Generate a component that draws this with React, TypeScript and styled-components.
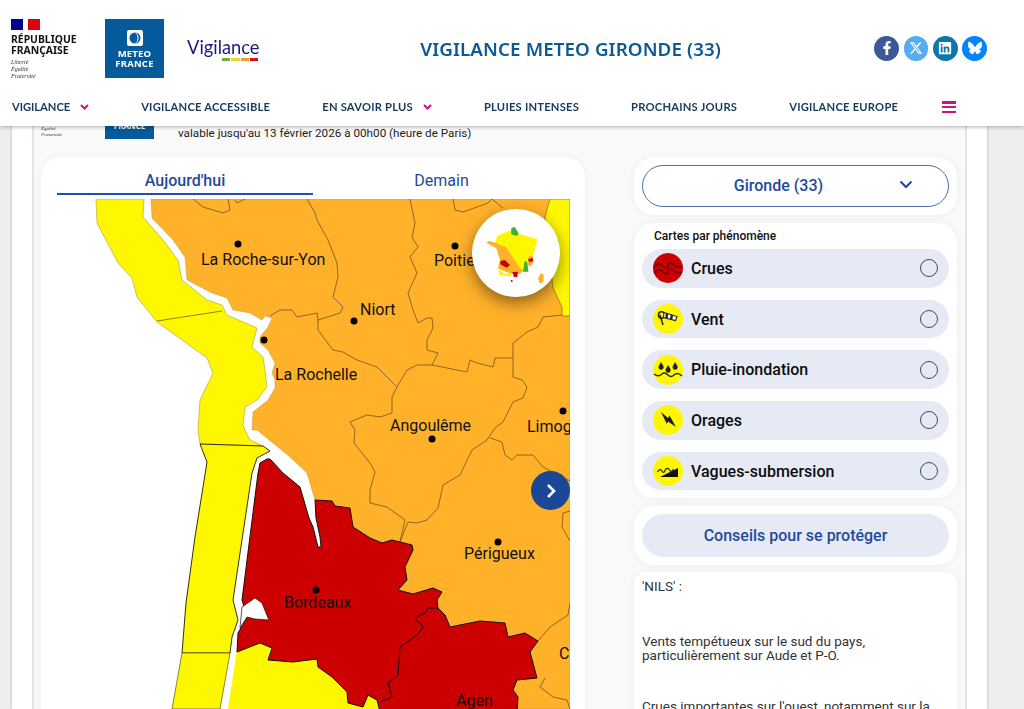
import styled, { createGlobalStyle } from "styled-components";
import { FaFacebookF, FaLinkedin } from "react-icons/fa";
import { FaBluesky, FaXTwitter } from "react-icons/fa6";

const GlobalStyle = createGlobalStyle`
  html, body {
    margin: 0;
    height: 100%;
    overflow: hidden;
    background: #eeeeee;
    font-family: Roboto, "Liberation Sans", sans-serif;
  }
`;

const Header = styled.header`
  position: fixed;
  top: 0;
  left: 0;
  right: 0;
  z-index: 10;
  height: 126px;
  background: #fff;
  box-shadow: 0 1px 4px rgba(0, 0, 0, 0.3);
`;

const TopRow = styled.div`
  display: flex;
  align-items: flex-start;
  height: 88px;
  padding: 19px 37px 0 11px;
  box-sizing: border-box;
`;

const Marianne = styled.div`
  width: 94px;
  flex: none;
`;

const Flag = styled.div`
  width: 29px;
  height: 11px;
  margin-bottom: 4px;
  background: linear-gradient(90deg, #000091 0 40%, #fff 40% 58%, #e1000f 58%);
`;

const Republic = styled.div`
  font: bold 10.4px/11px "Noto Sans", "Liberation Sans", sans-serif;
  color: #111;
`;

const Motto = styled.div<{ $small?: boolean }>`
  font: italic ${(p) => (p.$small ? "5px/6px" : "6px/7px")} "Liberation Serif", serif;
  color: #333;
  margin-top: ${(p) => (p.$small ? "0" : "3px")};
`;

const MeteoLogo = styled.div`
  width: 59px;
  height: 59px;
  flex: none;
  background: #045a9a;
  display: flex;
  flex-direction: column;
  align-items: center;
  padding-top: 11px;
  box-sizing: border-box;
  color: #fff;
  font: bold 9.5px/9.5px "Noto Sans", "Liberation Sans", sans-serif;
  letter-spacing: 0.2px;
  text-align: center;
  svg {
    margin-bottom: 3px;
  }
`;

const VigilanceLogo = styled.div`
  width: 72px;
  margin: 19px 0 0 23px;
  flex: none;
  color: #1a1a82;
  font: 400 18.3px/19px Lato, sans-serif;
`;

const LevelBars = styled.div`
  display: flex;
  gap: 1px;
  height: 3px;
  margin: 1px 1px 0 35px;
`;

const LevelBar = styled.span<{ $color: string }>`
  flex: 1;
  background: ${(p) => p.$color};
`;

const Title = styled.h1`
  flex: 1;
  margin: 17px 0 0;
  text-align: center;
  padding-left: 8px;
  font: 600 18.75px/26px "Noto Sans", sans-serif;
  letter-spacing: 0.1px;
  color: #0b5a96;
`;

const Socials = styled.div`
  display: flex;
  gap: 4.5px;
  margin-top: 17px;
  flex: none;
`;

const SocialLink = styled.a<{ $bg: string }>`
  width: 24.8px;
  height: 24.8px;
  border-radius: 50%;
  background: ${(p) => p.$bg};
  color: #fff;
  display: flex;
  align-items: center;
  justify-content: center;
  font-size: 14px;
`;

const Nav = styled.nav`
  display: flex;
  align-items: center;
  gap: 52px;
  height: 38px;
  padding-left: 12px;
`;

const NavItem = styled.a`
  display: flex;
  align-items: center;
  gap: 10px;
  font: 700 11.2px/14px Lato, sans-serif;
  letter-spacing: 0.22px;
  color: #17395c;
  text-transform: uppercase;
  &:first-child {
    letter-spacing: -0.05px;
  }
`;

const Burger = styled.span`
  width: 14px;
  height: 12px;
  margin-left: -8px;
  background: linear-gradient(#d0127f 0 2.5px, transparent 2.5px 4.5px, #d0127f 4.5px 7px, transparent 7px 9.5px, #d0127f 9.5px);
`;

const Sheet = styled.div`
  width: 935px;
  height: 100vh;
  margin-left: 12px;
  padding: 0 20px;
  background: #fff;
  box-shadow: 0 0 3px rgba(0, 0, 0, 0.25);
`;

const Frame = styled.main`
  height: 100%;
  border: solid #e4e4e4;
  border-width: 0 2px;
  background: #fafafa;
  padding: 0 7px;
  box-sizing: border-box;
`;

const Banner = styled.div`
  display: flex;
  align-items: flex-end;
  height: 139px;
  margin-bottom: 18px;
`;

const BannerMotto = styled.div`
  width: 64px;
  flex: none;
  padding: 0 0 1px 0;
  box-sizing: border-box;
`;

const BannerLogo = styled.div`
  width: 49px;
  height: 49px;
  background: #045a9a;
  display: flex;
  align-items: flex-end;
  justify-content: center;
  padding-bottom: 9px;
  box-sizing: border-box;
  color: #fff;
  font: bold 8px/9px "Noto Sans", sans-serif;
`;

const Validity = styled.p`
  margin: 0 0 -1px 24px;
  font-size: 11.7px;
  line-height: 13px;
  color: #1c1c1c;
`;

const Columns = styled.div`
  display: flex;
  gap: 49px;
  align-items: flex-start;
`;

const MapPanel = styled.section`
  width: 544px;
  flex: none;
  padding: 0 15px 0 16px;
  box-sizing: border-box;
  background: #fff;
  border-radius: 20px 20px 0 0;
  box-shadow: 0 0 10px rgba(0, 0, 0, 0.05);
`;

const Tabs = styled.div`
  display: grid;
  grid-template-columns: 256px 1fr;
  height: 42px;
`;

const Tab = styled.div<{ $active?: boolean }>`
  height: 36px;
  line-height: 47px;
  text-align: center;
  font-size: 16px;
  font-weight: ${(p) => (p.$active ? 500 : 400)};
  color: #1f4a9c;
  border-bottom: 2px solid ${(p) => (p.$active ? "#1e4fb0" : "transparent")};
`;

const MapArea = styled.div`
  position: relative;
  width: 513px;
  height: 520px;
`;

const MapDrawing = styled.svg`
  display: block;
  width: 513px;
  height: 520px;
`;

const MapLabel = styled.text`
  font: 400 16px Roboto, sans-serif;
  fill: #111;
`;

const DeptLine = styled.polyline`
  fill: none;
  stroke: #75521a;
  stroke-width: 0.8;
`;

const MiniMapButton = styled.div`
  position: absolute;
  left: 415px;
  top: 10px;
  width: 88px;
  height: 88px;
  border-radius: 50%;
  background: #fff;
  box-shadow: 0 6px 16px rgba(0, 0, 0, 0.45);
  svg {
    display: block;
  }
`;

const NextButton = styled.div`
  position: absolute;
  left: 474px;
  top: 272px;
  width: 39px;
  height: 39px;
  border-radius: 50%;
  background: #1b4796;
  color: #fff;
  display: flex;
  align-items: center;
  justify-content: center;
`;

const Sidebar = styled.aside`
  width: 323px;
  flex: none;
  display: flex;
  flex-direction: column;
  gap: 8px;
`;

const Card = styled.div`
  background: #fff;
  border-radius: 20px;
  padding: 8px;
  box-shadow: 0 0 10px rgba(0, 0, 0, 0.06);
`;

const Selector = styled.div`
  height: 42px;
  box-sizing: border-box;
  border: 1px solid #4f70ad;
  border-radius: 21px;
  display: flex;
  align-items: center;
  justify-content: center;
  position: relative;
  font-size: 16px;
  font-weight: 500;
  color: #1f4a9c;
  padding: 0 34px 2px 0;
  svg {
    position: absolute;
    right: 35px;
    top: 14px;
  }
`;

const CardTitle = styled.div`
  font-size: 12px;
  font-weight: 500;
  line-height: 14px;
  color: #111;
  padding: 0 0 6px 12px;
  margin-top: -2px;
`;

const Phenomena = styled.div`
  display: flex;
  flex-direction: column;
  gap: 12px;
`;

const PhenomenonRow = styled.label`
  height: 38.7px;
  display: flex;
  align-items: center;
  gap: 8px;
  padding: 0 11px;
  border-radius: 20px;
  background: #e6eaf5;
  font-size: 16px;
  font-weight: 500;
  color: #0c0c0c;
  svg {
    flex: none;
  }
`;

const RowLabel = styled.span`
  flex: 1;
`;

const Radio = styled.span`
  width: 16px;
  height: 16px;
  border: 1px solid #3c4a68;
  border-radius: 50%;
`;

const AdviceButton = styled.div`
  height: 43px;
  border-radius: 22px;
  background: #e6eaf5;
  display: flex;
  align-items: center;
  justify-content: center;
  font-size: 16px;
  font-weight: 500;
  color: #1f4a9c;
`;

const Bulletin = styled.div`
  background: #fff;
  border-radius: 12px 12px 0 0;
  margin-top: -1.5px;
  padding: 7px 8px;
  font-size: 13.5px;
  line-height: 14px;
  color: #333;
  height: 200px;
  box-shadow: 0 0 10px rgba(0, 0, 0, 0.06);
`;

const BulletinPara = styled.p`
  margin: 0 0 41px;
  &:nth-child(2) {
    margin-bottom: 37px;
  }
`;

const ORANGE = "#ffb12a";
const YELLOW = "#fff700";
const RED = "#cc0000";

const coastNorthYellow =
  "96,199 97,223 118,263 132,278 137,297 157,322 207,358 213,373 200,400 198,430 200,444 263,446 250,440 245,430 243,425 245,407 257,400 267,387 265,370 263,357 252,347 257,328 227,315 222,305 207,300 182,280 178,260 163,240 143,217 144,199";
const girondeYellow =
  "200,444 207,462 195,537 186,603 182,653 230,653 232,637 238,620 233,600 252,473 257,458 270,451 263,446";
const landesYellow = "182,653 172,709 220,709 230,653";
const southYellow = "237,650 262,640 320,655 400,709 228,709";
const eastYellow = "550,199 570,199 570,316 562,316 562,307 553,288 545,217";
const orangeLand =
  "151,199 152,218 173,240 185,257 187,280 212,293 227,298 233,310 250,313 262,320 265,316 272,318 268,327 260,337 260,343 268,350 275,363 272,373 275,380 275,388 268,400 253,412 252,430 257,430 273,443 290,457 307,473 315,500 332,501 335,506 350,508 353,527 370,538 382,543 392,540 400,542 412,545 413,550 405,567 407,580 398,590 413,594 433,588 442,592 437,600 438,608 445,615 450,627 480,621 505,623 508,637 525,633 538,641 530,652 537,678 517,680 513,690 518,697 517,709 570,709 570,316 562,316 562,307 553,288 545,217 550,199";
const redLand =
  "267,459 270,459 283,473 300,487 309,518 313,527 318,547 321,547 320,537 316,518 315,500 332,501 335,506 350,508 353,527 370,538 382,543 392,540 400,542 412,545 413,550 405,567 407,580 398,590 413,594 433,588 442,592 437,600 438,608 445,615 450,627 480,621 505,623 508,637 525,633 538,641 530,652 537,678 517,680 513,690 518,697 517,712 380,712 377,700 368,695 363,707 348,703 347,692 332,677 318,667 317,659 293,662 268,660 272,648 260,643 237,652 238,633 247,617 242,600 258,473 260,463";
const arcachon = "242,607 255,598 262,603 268,618 269,620 255,619 247,617 240,628";
const redDivide =
  "438,608 428,608 425,613 415,618 423,627 417,635 400,647 398,675 388,683 392,697 380,702";

const deptLines = [
  "193,199 203,207 223,213 230,210 228,199",
  "235,200 237,203 245,199",
  "307,199 315,213 317,220 328,240 337,263 338,277 333,297 343,307 340,313 318,320",
  "270,316 280,310 292,310 297,317 317,313 318,320 318,330 333,350 343,352 357,360 377,367 397,387 392,397 392,413 380,417 367,415 350,422 355,430 354,443 370,463 375,472 370,490 370,503 387,507 405,520 400,542",
  "397,387 407,370 417,365 432,365 438,353 427,350 427,340 433,328 432,318 427,318 418,323 413,310 408,293 417,273 410,257 418,247 412,237 415,223 410,199",
  "432,365 457,370 467,372 470,360 477,363 493,367 495,358 513,358 513,343 527,332 538,327 543,317 562,315",
  "513,358 513,377 522,380 527,387 523,398 513,402 503,422 495,428 487,440 472,450 460,475 443,485 438,508 427,520 417,523 408,522 400,542",
  "490,438 502,442 505,455 512,460 517,455 533,455 543,467 570,481",
  "453,199 455,210 463,212 477,207 488,203 492,199 503,208",
  "570,511 563,513 562,527 570,541",
  "570,603 568,615 550,627 538,641",
  "545,678 540,687 553,697 567,700 570,709",
];

const cities = [
  { name: "La Roche-sur-Yon", x: 201, y: 265, dotX: 238, dotY: 244 },
  { name: "Niort", x: 360, y: 315, dotX: 354, dotY: 321 },
  { name: "Poitiers", x: 434, y: 266, dotX: 455, dotY: 246 },
  { name: "La Rochelle", x: 275, y: 380, dotX: 264, dotY: 340 },
  { name: "Angoulême", x: 390, y: 431, dotX: 432, dotY: 439 },
  { name: "Limoges", x: 527, y: 432, dotX: 563, dotY: 411 },
  { name: "Périgueux", x: 464, y: 559, dotX: 498, dotY: 542 },
  { name: "Bordeaux", x: 284, y: 608, dotX: 316, dotY: 590 },
  { name: "Agen", x: 456, y: 706 },
  { name: "Cahors", x: 559, y: 659 },
];

function RegionMap() {
  return (
    <MapDrawing viewBox="57 199 513 520">
      <path d="M96 199H566a4 4 0 0 1 4 4V719H96Z" fill="#fff" />
      <polygon points={orangeLand} fill={ORANGE} stroke="#b08a30" strokeWidth="0.4" />
      <polygon points={eastYellow} fill={YELLOW} stroke="#75621a" strokeWidth="0.6" />
      <polygon points={coastNorthYellow} fill={YELLOW} stroke="#a9a030" strokeWidth="0.6" />
      <line x1="157" y1="321" x2="222" y2="311" stroke="#6f6a10" strokeWidth="0.8" />
      <polygon points={southYellow} fill={YELLOW} />
      <polygon points={girondeYellow} fill={YELLOW} stroke="#1c1c00" strokeWidth="0.9" />
      <polygon points={landesYellow} fill={YELLOW} stroke="#55550a" strokeWidth="0.7" />
      {deptLines.map((points) => (
        <DeptLine key={points} points={points} />
      ))}
      <polygon points={redLand} fill={RED} stroke="#111" strokeWidth="1" />
      <polygon points={arcachon} fill="#fff" stroke="#111" strokeWidth="0.7" />
      <polyline points={redDivide} fill="none" stroke="#111" strokeWidth="1" />
      {cities.map((c) => (
        <g key={c.name}>
          {c.dotX && <circle cx={c.dotX} cy={c.dotY} r="3.5" fill="#000" />}
          <MapLabel x={c.x} y={c.y}>
            {c.name}
          </MapLabel>
        </g>
      ))}
    </MapDrawing>
  );
}

function MiniFrance() {
  return (
    <svg width="88" height="88" viewBox="22 12 264 264">
      <path d="M97 92L140 75 165 88 218 102 208 145 190 165 176 198 165 205 125 130 90 125Z" fill={YELLOW} />
      <path d="M100 190L118 207 140 204 140 214 122 212 105 210Z" fill={YELLOW} />
      <path d="M65 113L72 108 88 112 125 127 140 150 165 188 176 198 165 206 140 206 115 197 100 190 106 165 95 130Z" fill={ORANGE} />
      <path d="M107 168L120 165 136 180 126 188 107 178Z" fill={RED} />
      <path d="M143 201L160 200 158 216 148 216Z" fill={RED} />
      <circle cx="141" cy="228" r="3" fill={RED} />
      <path d="M140 69L150 66 162 85 156 93 140 88Z" fill="#3fae3c" />
      <path d="M180 168L188 170 191 200 175 200Z" fill="#3fae3c" />
      <path d="M190 156L203 150 207 170 196 186 190 178Z" fill={ORANGE} />
      <path d="M189 164L203 158 206 168 196 171Z" fill={RED} />
      <path d="M228 204L237 210 236 230 226 236 220 222Z" fill={ORANGE} />
    </svg>
  );
}

const yellowDisc = <circle cx="15" cy="15" r="15" fill="#fff700" />;

const phenomena = [
  {
    name: "Crues",
    icon: (
      <>
        <circle cx="15" cy="15" r="15" fill="#cc0000" />
        <path d="M1 14c4-4 6-4 9-1s5 3 5 0 3-4 6-1 5 3 8 1M1 20c4-4 6-4 9-1s5 3 5 0 3-4 6-1 5 3 8 1" fill="none" stroke="#6f0505" strokeWidth="1.6" />
      </>
    ),
  },
  {
    name: "Vent",
    icon: (
      <>
        {yellowDisc}
        <path d="M10 21L7 11" fill="none" stroke="#222" strokeWidth="1.5" />
        <ellipse cx="8.500" cy="11" rx="3" ry="3.2" fill="none" stroke="#222" strokeWidth="1.5" />
        <path d="M11 8.500L24 12.500 22.500 16.500 10.500 13.500Z" fill="#fff" stroke="#222" strokeWidth="1.1" />
        <path d="M14 9.500L13.500 14.200M19 11L18 15.500" stroke="#222" strokeWidth="2.4" />
      </>
    ),
  },
  {
    name: "Pluie-inondation",
    icon: (
      <>
        {yellowDisc}
        <path d="M8 7l2.400 4a2.600 2.600 0 1 1-4.600 0ZM15 10l2.400 4a2.600 2.600 0 1 1-4.600 0ZM22 7l2.400 4a2.600 2.600 0 1 1-4.600 0Z" fill="#222" />
        <path d="M1 19c4 3 6 2 8 0s4-1 6 1 4 2 6 0 5-2 8 1" fill="none" stroke="#222" strokeWidth="1.3" />
      </>
    ),
  },
  {
    name: "Orages",
    icon: (
      <>
        {yellowDisc}
        <path d="M8 7L15 13 16.500 10.500 23 22 15 16.500 13.800 19Z" fill="#1d1d1d" />
      </>
    ),
  },
  {
    name: "Vagues-submersion",
    icon: (
      <>
        {yellowDisc}
        <path d="M7 21L25 12V21Z" fill="#111" />
        <path d="M4.500 16c2-3 3.500-3 4.500-1s2 2 3-.5 3-3 4.500-.5 2.500 1.500 4-1" fill="none" stroke="#222" strokeWidth="1.2" />
      </>
    ),
  },
];

const levels = ["#78a944", "#f6d32b", "#f39a36", "#d8101c"];

function App() {
  return (
    <>
      <GlobalStyle />
      <Header>
        <TopRow>
          <Marianne>
            <Flag />
            <Republic>
              RÉPUBLIQUE
              <br />
              FRANÇAISE
            </Republic>
            <Motto>
              Liberté
              <br />
              Égalité
              <br />
              Fraternité
            </Motto>
          </Marianne>
          <MeteoLogo>
            <svg width="16" height="16" viewBox="0 0 16 16">
              <rect width="16" height="16" rx="2" fill="#fff" />
              <circle cx="8" cy="8" r="5.500" fill="#045a9a" />
              <path d="M8 2.500a6 6 0 0 1 0 11 7 7 0 0 0 0-11Z" fill="#fff" />
            </svg>
            METEO
            <br />
            FRANCE
          </MeteoLogo>
          <VigilanceLogo>
            Vigilance
            <LevelBars>
              {levels.map((color) => (
                <LevelBar key={color} $color={color} />
              ))}
            </LevelBars>
          </VigilanceLogo>
          <Title>VIGILANCE METEO GIRONDE (33)</Title>
          <Socials>
            <SocialLink $bg="#3b5998">
              <FaFacebookF />
            </SocialLink>
            <SocialLink $bg="#55acee">
              <FaXTwitter />
            </SocialLink>
            <SocialLink $bg="#0e76a8">
              <FaLinkedin />
            </SocialLink>
            <SocialLink $bg="#0085ff">
              <FaBluesky />
            </SocialLink>
          </Socials>
        </TopRow>
        <Nav>
          <NavItem>
            Vigilance
            <svg width="9" height="6" viewBox="0 0 9 6">
              <path d="M1 1l3.500 3.500L8 1" fill="none" stroke="#c8127e" strokeWidth="2" />
            </svg>
          </NavItem>
          <NavItem>Vigilance accessible</NavItem>
          <NavItem>
            En savoir plus
            <svg width="9" height="6" viewBox="0 0 9 6">
              <path d="M1 1l3.500 3.500L8 1" fill="none" stroke="#c8127e" strokeWidth="2" />
            </svg>
          </NavItem>
          <NavItem>Pluies intenses</NavItem>
          <NavItem>Prochains jours</NavItem>
          <NavItem>Vigilance Europe</NavItem>
          <Burger />
        </Nav>
      </Header>
      <Sheet>
        <Frame>
          <Banner>
            <BannerMotto>
              <Motto $small>
                Égalité
                <br />
                Fraternité
              </Motto>
            </BannerMotto>
            <BannerLogo>FRANCE</BannerLogo>
            <Validity>valable jusqu'au 13 février 2026 à 00h00 (heure de Paris)</Validity>
          </Banner>
          <Columns>
            <MapPanel>
              <Tabs>
                <Tab $active>Aujourd'hui</Tab>
                <Tab>Demain</Tab>
              </Tabs>
              <MapArea>
                <RegionMap />
                <MiniMapButton>
                  <MiniFrance />
                </MiniMapButton>
                <NextButton>
                  <svg width="12" height="16" viewBox="0 0 12 16">
                    <path d="M3 2l6 6-6 6" fill="none" stroke="#fff" strokeWidth="2.6" />
                  </svg>
                </NextButton>
              </MapArea>
            </MapPanel>
            <Sidebar>
              <Card>
                <Selector>
                  Gironde (33)
                  <svg width="14" height="9" viewBox="0 0 14 9">
                    <path d="M1.500 1.500L7 7l5.500-5.500" fill="none" stroke="#1f4a9c" strokeWidth="2" />
                  </svg>
                </Selector>
              </Card>
              <Card>
                <CardTitle>Cartes par phénomène</CardTitle>
                <Phenomena>
                  {phenomena.map((p) => (
                    <PhenomenonRow key={p.name}>
                      <svg width="30" height="30" viewBox="0 0 30 30">
                        {p.icon}
                      </svg>
                      <RowLabel>{p.name}</RowLabel>
                      <Radio />
                    </PhenomenonRow>
                  ))}
                </Phenomena>
              </Card>
              <Card>
                <AdviceButton>Conseils pour se protéger</AdviceButton>
              </Card>
              <Bulletin>
                <BulletinPara>'NILS' :</BulletinPara>
                <BulletinPara>
                  Vents tempétueux sur le sud du pays,
                  <br />
                  particulièrement sur Aude et P-O.
                </BulletinPara>
                <BulletinPara>Crues importantes sur l'ouest, notamment sur la</BulletinPara>
              </Bulletin>
            </Sidebar>
          </Columns>
        </Frame>
      </Sheet>
    </>
  );
}

export default App;
